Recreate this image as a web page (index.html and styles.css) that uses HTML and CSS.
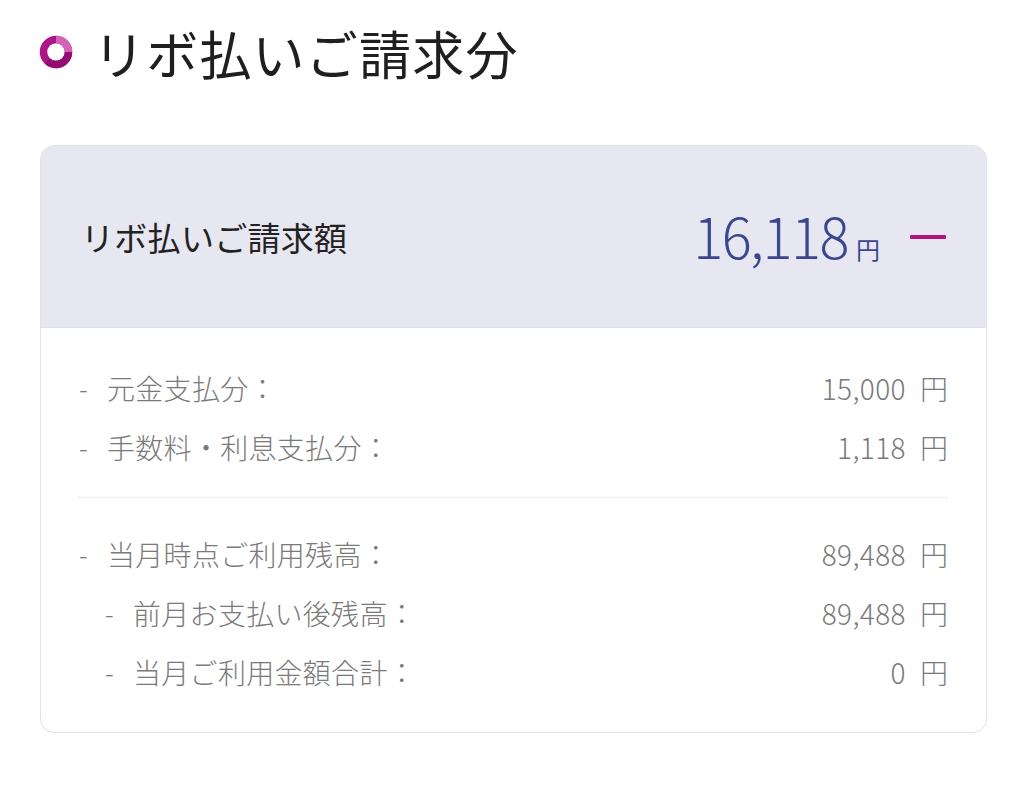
FILE: index.html
```html
<!DOCTYPE html>
<html lang="ja">
<head>
<meta charset="utf-8">
<link rel="stylesheet" href="styles.css">
</head>
<body>
<h1 class="title">
  <svg class="title-icon" width="34" height="34" viewBox="0 0 34 34">
    <circle cx="17" cy="17" r="12.5" fill="none" stroke="#b01489" stroke-width="7.5"/>
    <path d="M17 4.5 A12.5 12.5 0 0 1 29.5 17" fill="none" stroke="#d263b6" stroke-width="7.5"/>
    <path d="M29.5 17 A12.5 12.5 0 0 1 8.2 25.8" fill="none" stroke="#940b72" stroke-width="7.5"/>
  </svg>
  <span>リボ払いご請求分</span>
</h1>

<section class="card">
  <div class="card-head">
    <span class="head-label">リボ払いご請求額</span>
    <span class="head-amount"><span class="amount-num">16,118</span><span class="amount-yen">円</span></span>
    <span class="toggle"></span>
  </div>
  <div class="card-body">
    <div class="row"><span class="label"><span class="dash">-</span>元金支払分：</span><span class="value"><span class="num">15,000</span><span class="yen">円</span></span></div>
    <div class="row"><span class="label"><span class="dash">-</span>手数料・利息支払分：</span><span class="value"><span class="num">1,118</span><span class="yen">円</span></span></div>
    <div class="divider"></div>
    <div class="row"><span class="label"><span class="dash">-</span>当月時点ご利用残高：</span><span class="value"><span class="num">89,488</span><span class="yen">円</span></span></div>
    <div class="row sub"><span class="label"><span class="dash">-</span>前月お支払い後残高：</span><span class="value"><span class="num">89,488</span><span class="yen">円</span></span></div>
    <div class="row sub"><span class="label"><span class="dash">-</span>当月ご利用金額合計：</span><span class="value"><span class="num">0</span><span class="yen">円</span></span></div>
  </div>
</section>
</body>
</html>
```

FILE: styles.css
```css
html, body {
  margin: 0;
  padding: 0;
  background: #ffffff;
}
body {
  font-family: "Noto Sans CJK JP", "Noto Sans", sans-serif;
  padding: 0 37px 0 40px;
  color: #222;
}
.title {
  display: flex;
  align-items: center;
  height: 104px;
  margin: 0 0 41px 0;
  font-size: 52px;
  font-weight: 400;
  color: #1f1f1f;
  letter-spacing: 1.2px;
}
.title-icon {
  margin: 0 20px 0 -1px;
  flex: none;
}
.card {
  border: 1.5px solid #e2e2e8;
  border-radius: 14px;
  overflow: hidden;
  background: #fff;
}
.card-head {
  display: flex;
  align-items: center;
  height: 181px;
  padding: 0 40px 0 40px;
  background: #e7e7f1;
  border-bottom: 1px solid #e0e0ea;
}
.head-label {
  flex: 1;
  font-size: 33px;
  color: #222;
  letter-spacing: 0.3px;
}
.head-amount {
  display: flex;
  align-items: baseline;
  color: #3c4690;
}
.amount-num {
  font-size: 56px;
  font-weight: 300;
  letter-spacing: -1.5px;
  line-height: 1;
}
.amount-yen {
  font-size: 24px;
  margin-left: 8px;
}
.toggle {
  width: 36px;
  height: 4px;
  background: #b3137f;
  margin-left: 30px;
  border-radius: 1px;
}
.card-body {
  padding: 30px 38px 31px 38px;
}
.row {
  display: flex;
  align-items: center;
  justify-content: space-between;
  height: 59px;
  font-size: 28px;
  color: #7a7a7a;
  font-weight: 300;
}
.label {
  display: flex;
  align-items: center;
  letter-spacing: 0.3px;
}
.dash {
  width: 28px;
  font-size: 26px;
}
.sub .label {
  padding-left: 26px;
}
.value {
  display: flex;
  align-items: baseline;
}
.num {
  letter-spacing: 0.4px;
}
.yen {
  margin-left: 14px;
}
.divider {
  border-top: 1.5px dotted #dddddd;
  margin: 21px 0 26px 0;
}
```
